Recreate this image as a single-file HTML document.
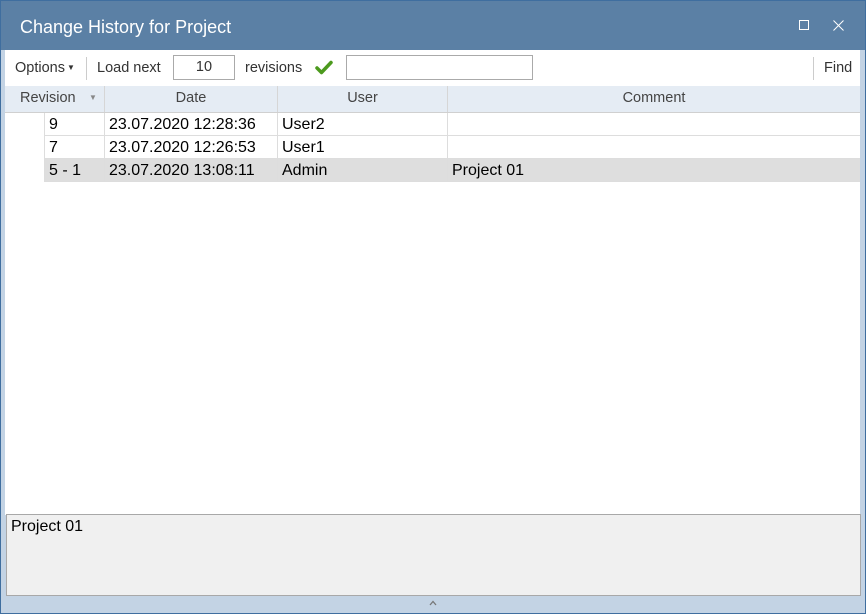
<!DOCTYPE html>
<html><head><style>
*{margin:0;padding:0;box-sizing:border-box}
body{width:866px;height:614px;overflow:hidden;background:#c3d3e4;font-family:"Liberation Sans",sans-serif;font-size:15px;color:#000;position:relative}
.win{position:absolute;left:0;top:0;width:866px;height:614px;border:1px solid #3f6e9f;background:#c3d3e4}
.title{position:absolute;left:0;top:0;width:864px;height:49px;background:#5b80a5;color:#fff;font-size:18px;line-height:52px;padding-left:19px}
.main{position:absolute;left:4px;top:49px;width:855px;height:465px;background:#fff}
.tb{position:absolute;top:0;left:0;width:855px;height:36px;font-size:14.5px;color:#333}
.tb span{position:absolute;top:10px}
.sep{position:absolute;top:7px;width:1px;height:23px;background:#ccc}
.inp{position:absolute;top:5px;height:25px;border:1px solid #aaa;background:#fff}
.hdr{position:absolute;top:36px;left:0;width:855px;height:27px;background:#e5ecf4;border-bottom:1px solid #d0d0d0;color:#444;font-size:14.5px}
.hdr div{position:absolute;top:0;height:26px;line-height:24px;text-align:center;border-right:1px solid #d6d6d6}
.row{position:absolute;left:39px;width:816px;height:23px;border-bottom:1px solid #ddd;font-size:16px}
.row div{position:absolute;top:0;height:22px;line-height:24px;padding-left:4px;border-right:1px solid #ddd}
.bot{position:absolute;left:5px;top:513px;width:855px;height:82px;background:#f0f0f0;border:1px solid #a8a8a8;padding:3px 4px;font-size:16px}
</style></head><body>
<div class="win">
<div class="title">Change History for Project
<svg style="position:absolute;left:798px;top:19px" width="11" height="11"><rect x="0.5" y="0.5" width="9" height="9" fill="none" stroke="#fff"/></svg>
<svg style="position:absolute;left:832px;top:19px" width="11" height="11"><path d="M0.5 0.5L10.5 10.5M10.5 0.5L0.5 10.5" stroke="#fff"/></svg>
</div>
<div class="main">
<div class="tb">
<span style="left:10px">Options<span style="position:relative;top:-2px;font-size:8px;margin-left:2px">▼</span></span>
<div class="sep" style="left:81px"></div>
<span style="left:92px">Load next</span>
<div class="inp" style="left:168px;width:62px;text-align:center;line-height:23px">10</div>
<span style="left:240px">revisions</span>
<svg style="position:absolute;left:310px;top:10px" width="18" height="15"><path d="M2 8L6.5 12.5L16 2.5" stroke="#4c9a1e" stroke-width="3.5" fill="none" stroke-linecap="round" stroke-linejoin="round"/></svg>
<div class="inp" style="left:341px;width:187px"></div>
<div class="sep" style="left:808px"></div>
<span style="left:819px">Find</span>
</div>
<div class="hdr">
<div style="left:0;width:100px;text-align:left;padding-left:15px">Revision<span style="position:absolute;left:84px;top:0;font-size:8px;color:#888">▼</span></div>
<div style="left:100px;width:173px">Date</div>
<div style="left:273px;width:170px">User</div>
<div style="left:443px;width:412px;border-right:none">Comment</div>
</div>
<div class="row" style="top:63px"><div style="left:0;width:61px;border-left:1px solid #ddd">9</div><div style="left:61px;width:173px">23.07.2020 12:28:36</div><div style="left:234px;width:170px">User2</div></div>
<div class="row" style="top:86px"><div style="left:0;width:61px;border-left:1px solid #ddd">7</div><div style="left:61px;width:173px">23.07.2020 12:26:53</div><div style="left:234px;width:170px">User1</div></div>
<div class="row" style="top:109px;background:#dedede"><div style="left:0;width:61px;border-left:1px solid #ddd">5 - 1</div><div style="left:61px;width:173px">23.07.2020 13:08:11</div><div style="left:234px;width:170px">Admin</div><div style="left:404px;width:412px;border-right:none">Project 01</div></div>
</div>
<div class="bot">Project 01</div>
<svg style="position:absolute;left:428px;top:599px" width="8" height="6"><path d="M1 5L4 1.5L7 5" stroke="#777" stroke-width="1.3" fill="none"/></svg>
</div>
</body></html>
